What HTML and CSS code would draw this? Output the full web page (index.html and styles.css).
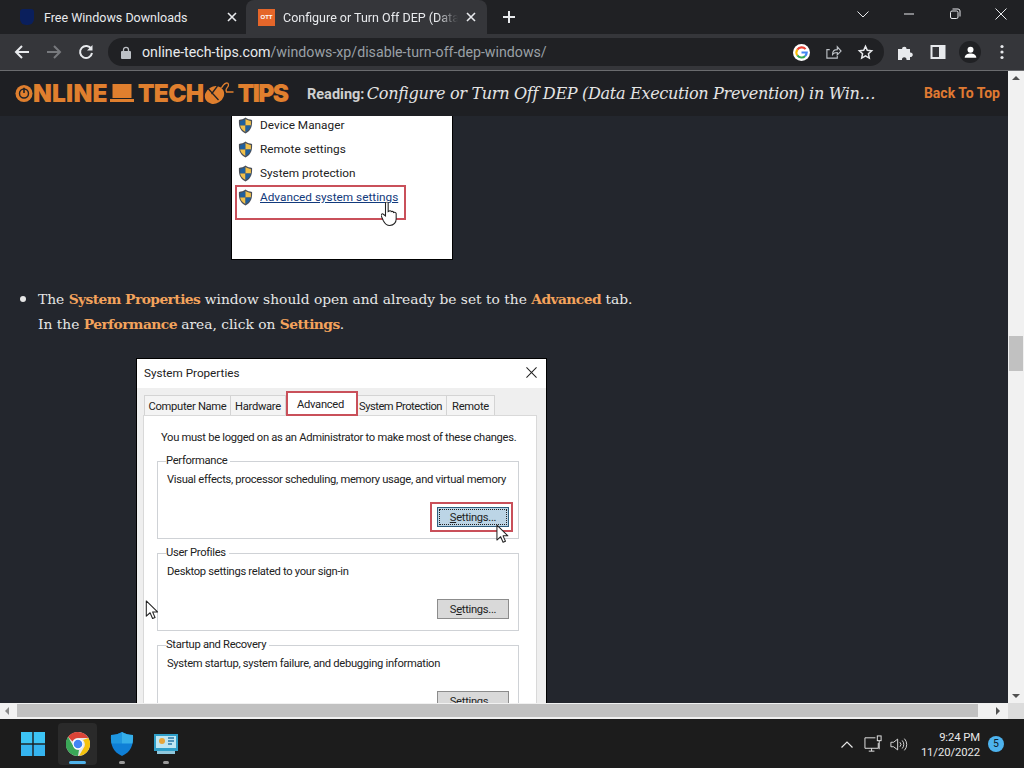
FILE: index.html
```html
<!DOCTYPE html>
<html lang="en">
<head>
<meta charset="utf-8">
<title>Configure or Turn Off DEP</title>
<link rel="stylesheet" href="styles.css">
</head>
<body>
<svg class="defs" width="0" height="0">
  <symbol id="shield" viewBox="0 0 16 18">
    <path d="M8 .5C6 2 3.500 2.800 1 3c-.3 6 .6 11 7 14.500C14.400 14 15.300 9 15 3 12.500 2.800 10 2 8 .5z" fill="#4a4f58"/>
    <path d="M8 2v7H2.300C2.200 7.500 2.200 5.800 2.300 4.100 4.300 3.900 6.300 3.200 8 2z" fill="#1f5f9e"/>
    <path d="M8 2c1.700 1.200 3.700 1.900 5.700 2.100.1 1.700.1 3.400 0 4.900H8z" fill="#f1c04a"/>
    <path d="M2.300 9H8v6.800C4.300 13.800 2.700 11.700 2.300 9z" fill="#f1c04a"/>
    <path d="M8 9h5.700c-.4 2.700-2 4.800-5.700 6.800z" fill="#1f5f9e"/>
  </symbol>
  <symbol id="arrow" viewBox="0 0 14 21">
    <path d="M1 1v16l4-3.600 2.600 6 2.600-1.100-2.600-5.800h5.200z" fill="#fff" stroke="#222" stroke-width="1.100" stroke-linejoin="round"/>
  </symbol>
</svg>

<header class="tabstrip">
  <div class="tab">
    <span class="fav-blue"></span>
    <span class="tab-title">Free Windows Downloads</span>
    <svg class="tab-x" viewBox="0 0 10 10"><path d="M1 1l8 8M9 1l-8 8"/></svg>
  </div>
  <div class="tab active">
    <span class="fav-ott">OTT</span>
    <span class="tab-title fade">Configure or Turn Off DEP (Data</span>
    <svg class="tab-x" viewBox="0 0 10 10"><path d="M1 1l8 8M9 1l-8 8"/></svg>
  </div>
  <svg class="newtab" viewBox="0 0 12 12"><path d="M6 0v12M0 6h12"/></svg>
  <div class="winctl">
    <svg class="ctl chev" viewBox="0 0 12 7"><path d="M.5.500 6 6l5.500-5.500"/></svg>
    <svg class="ctl" viewBox="0 0 12 12"><path d="M1 6h10"/></svg>
    <svg class="ctl" viewBox="0 0 12 12"><rect x="1.500" y="3" width="7.500" height="7.500" rx="1.500"/><path d="M3.500 1h5.500a2 2 0 0 1 2 2v5.500"/></svg>
    <svg class="ctl" viewBox="0 0 12 12"><path d="M.5.500l11 11M11.500.500l-11 11"/></svg>
  </div>
</header>

<nav class="toolbar">
  <svg class="tb-ic" viewBox="0 0 16 16"><path d="M15 8H2M8 2 2 8l6 6" fill="none" stroke="#e8eaed" stroke-width="2"/></svg>
  <svg class="tb-ic" viewBox="0 0 16 16"><path d="M1 8h13M8 2l6 6-6 6" fill="none" stroke="#77797d" stroke-width="2"/></svg>
  <svg class="tb-ic" viewBox="0 0 16 16"><path d="M13.300 5A6 6 0 1 0 14 9" fill="none" stroke="#e8eaed" stroke-width="2"/><path d="M14.500 1v5.500H9z" fill="#e8eaed"/></svg>
  <div class="omnibox">
    <svg class="lock" viewBox="0 0 10 13"><path d="M2.500 6V3.800a2.500 2.500 0 0 1 5 0V6" fill="none" stroke="#bdc1c6" stroke-width="1.300"/><rect y="5" width="10" height="8" rx="1" fill="#bdc1c6"/></svg>
    <span class="url"><span class="host">online-tech-tips.com</span>/windows-xp/disable-turn-off-dep-windows/</span>
    <svg class="omni-ic" viewBox="0 0 18 18"><circle cx="9" cy="9" r="9" fill="#fff"/><g fill="none" stroke-width="2.300"><path d="M13.300 5.400A5.500 5.500 0 0 0 4.600 5.900" stroke="#ea4335"/><path d="M4.600 5.900a5.500 5.500 0 0 0 0 6.200" stroke="#fbbc05"/><path d="M4.600 12.100a5.500 5.500 0 0 0 8.300.6" stroke="#34a853"/><path d="M12.900 12.700A5.500 5.500 0 0 0 14.500 9H9" stroke="#4285f4"/></g></svg>
    <svg class="omni-ic" viewBox="0 0 18 18"><path d="M13 10v5H2V6h3M8 11c0-3 2-5 5-5V3l4 4.500-4 4V9c-2 0-4 .5-5 2z" fill="none" stroke="#bdc1c6" stroke-width="1.200"/></svg>
    <svg class="omni-ic" viewBox="0 0 18 18"><path d="m9 2.500 1.900 4.200 4.600.5-3.400 3.100.9 4.600L9 12.600l-4 2.300.9-4.600-3.400-3.100 4.600-.5z" fill="none" stroke="#e8eaed" stroke-width="1.600"/></svg>
  </div>
  <div class="tb-right">
    <svg class="tb-ic" viewBox="0 0 16 16"><path d="M0 5h4a2.300 2.300 0 1 1 4.600 0H12v3.500a2.300 2.300 0 1 1 0 4.500V16H8.500a2.300 2.300 0 1 0-4.500 0H0z" fill="#e8eaed"/></svg>
    <svg class="tb-ic" viewBox="0 0 16 16"><rect x="1.500" y="2" width="13" height="12" fill="none" stroke="#e8eaed" stroke-width="2"/><rect x="9" y="2" width="6" height="12" fill="#e8eaed"/></svg>
    <span class="avatar"><svg viewBox="0 0 16 16"><circle cx="8" cy="5" r="3.200" fill="#fff"/><path d="M1.800 13.500c0-6 12.400-6 12.400 0z" fill="#fff"/></svg></span>
    <svg class="tb-ic" viewBox="0 0 16 16"><circle cx="8" cy="2.500" r="1.600" fill="#e8eaed"/><circle cx="8" cy="8" r="1.600" fill="#e8eaed"/><circle cx="8" cy="13.500" r="1.600" fill="#e8eaed"/></svg>
  </div>
</nav>

<div class="viewport">
  <main class="page">
    <div class="sitebar">
      <div class="logo">
        <svg class="logo-power" viewBox="0 0 20 20"><circle cx="10" cy="10" r="9.500" fill="#e07f2e"/><circle cx="10" cy="10" r="5" fill="none" stroke="#222327" stroke-width="1.600"/><path d="M10 3.500v6" stroke="#222327" stroke-width="1.800"/></svg>
        <span class="logo-n">NLINE</span>
        <svg class="logo-laptop" viewBox="0 0 24 18"><rect x="2.500" y="0" width="19" height="14" fill="#e07f2e"/><path d="M0 15h24v3H0z" fill="#e07f2e"/></svg>
        <span class="logo-e">TECH</span>
        <svg class="logo-mouse" viewBox="0 0 30 22"><ellipse cx="10" cy="13" rx="10" ry="8.500" transform="rotate(-30 10 13)" fill="#e07f2e"/><path d="M4 7l10 11M13 4 7 12" stroke="#222327" stroke-width="1.300"/><path d="M17 6c3-6 7-6 7-3s-4 3-2 7h7" fill="none" stroke="#e07f2e" stroke-width="1.300"/></svg>
        <span class="logo-t">TIPS</span>
      </div>
      <div class="reading"><b>Reading:</b> <i>Configure or Turn Off DEP (Data Execution Prevention) in Win…</i></div>
      <a class="totop">Back To Top</a>
    </div>

    <div class="article">
      <figure class="shot-links">
        <ul class="task-list">
          <li><svg class="sh"><use href="#shield"/></svg>Device Manager</li>
          <li><svg class="sh"><use href="#shield"/></svg>Remote settings</li>
          <li><svg class="sh"><use href="#shield"/></svg>System protection</li>
          <li class="hot"><svg class="sh"><use href="#shield"/></svg><u>Advanced system settings</u>
            <svg class="hand" viewBox="1 1 15.500 22.500"><path d="M5 1.500c1-1 2.500-1 2.500.5v8l1-.5 0 0c1-.5 2 0 2 .5 1-.5 2 0 2 .8 1-.5 2.500 0 2.500 1V17c0 3-2 6-6 6-3 0-4.500-1.500-6-4.500L1 14c-.6-1.500 1-2.500 2-1.500L5 14z" fill="#fff" stroke="#222" stroke-width="1"/></svg>
          </li>
        </ul>
      </figure>

      <ul class="steps">
        <li>The <b>System Properties</b> window should open and already be set to the <b>Advanced</b> tab.<br>In the <b>Performance</b> area, click on <b>Settings</b>.</li>
      </ul>

      <figure class="dialog">
        <div class="dlg-title"><span>System Properties</span><svg viewBox="0 0 12 12"><path d="M.5.500l11 11M11.500.500l-11 11"/></svg></div>
        <div class="dlg-tabs">
          <span class="dt dt-cn">Computer Name</span>
          <span class="dt dt-hw">Hardware</span>
          <span class="dt dt-adv">Advanced</span>
          <span class="dt dt-sp">System Protection</span>
          <span class="dt dt-re">Remote</span>
        </div>
        <div class="dlg-panel">
          <p class="dlg-note">You must be logged on as an Administrator to make most of these changes.</p>
          <fieldset class="grp">
            <legend>Performance</legend>
            <p>Visual effects, processor scheduling, memory usage, and virtual memory</p>
            <div class="btn-row"><span class="btn focus"><u>S</u>ettings...</span></div>
            <svg class="dlg-cursor"><use href="#arrow"/></svg>
          </fieldset>
          <fieldset class="grp">
            <legend>User Profiles</legend>
            <p>Desktop settings related to your sign-in</p>
            <div class="btn-row"><span class="btn">S<u>e</u>ttings...</span></div>
          </fieldset>
          <fieldset class="grp">
            <legend>Startup and Recovery</legend>
            <p>System startup, system failure, and debugging information</p>
            <div class="btn-row"><span class="btn">Se<u>t</u>tings...</span></div>
          </fieldset>
        </div>
      </figure>
      <svg class="stray-cursor"><use href="#arrow"/></svg>
    </div>
  </main>
  <div class="vscroll">
    <span class="v-up"></span>
    <span class="v-thumb"></span>
    <span class="v-down"></span>
  </div>
</div>

<div class="hscroll">
  <span class="h-left"></span>
  <span class="h-thumb"></span>
  <span class="h-right"></span>
  <span class="h-corner"></span>
</div>

<footer class="taskbar">
  <div class="tb-apps">
    <svg class="app start" viewBox="0 0 24 24"><g fill="#3cc4f5"><rect width="11.300" height="11.300"/><rect x="12.700" width="11.300" height="11.300"/><rect y="12.700" width="11.300" height="11.300" fill="#35b4f0"/><rect x="12.700" y="12.700" width="11.300" height="11.300" fill="#35b4f0"/></g></svg>
    <div class="tile on">
      <svg class="app" viewBox="0 0 24 24"><circle cx="12" cy="12" r="12" fill="#e8e8e8"/><path d="M12 0a12 12 0 0 1 10.400 6H12a6 6 0 0 0-5.500 3.500L2.100 5A12 12 0 0 1 12 0z" fill="#db4437"/><path d="M22.400 6A12 12 0 0 1 13 24l4.600-8A6 6 0 0 0 17 8z" fill="#f4c20d"/><path d="M2.100 5 7 13.500A6 6 0 0 0 13 18l-1 6A12 12 0 0 1 2.100 5z" fill="#3aa757"/><circle cx="12" cy="12" r="5.300" fill="#fff"/><circle cx="12" cy="12" r="4.300" fill="#4285f4"/></svg>
      <span class="ind long"></span>
    </div>
    <div class="tile">
      <svg class="app" viewBox="0 0 24 24"><path d="M12 0c3 2 7 3 11 3 .6 10-2 17-11 21C3 20 .4 13 1 3c4 0 8-1 11-3z" fill="#0f7fd6"/><path d="M12 0c3 2 7 3 11 3 .2 3 0 6-.5 8.500H12z" fill="#35aee8"/><path d="M12 0v11.500H1.500C1 9 .8 6 1 3c4 0 8-1 11-3z" fill="#1f97e0"/></svg>
      <span class="ind"></span>
    </div>
    <div class="tile">
      <svg class="app" viewBox="0 0 24 20"><rect width="24" height="17" fill="#2f9fc9"/><rect x="2" y="2" width="20" height="12" fill="#bfe6f2"/><circle cx="8" cy="7" r="3" fill="#e8a63a"/><path d="M14 4h6M14 7h6M14 10h4" stroke="#2a78a8" stroke-width="1.500"/><rect x="3" y="17" width="18" height="3" fill="#8fc7dc"/></svg>
      <span class="ind"></span>
    </div>
  </div>
  <div class="tray">
    <svg class="tr-chev" viewBox="0 0 12 7"><path d="M.5 6.500 6 1l5.500 5.500"/></svg>
    <svg class="tr-net" viewBox="0 0 20 18"><path d="M12 2.500H1v11h14V8M5 16.500h6M8 13.500v3" /><rect x="14" y=".5" width="4" height="5"/><path d="M16 5.500v9"/></svg>
    <svg class="tr-vol" viewBox="0 0 20 16"><path d="M1 5.500h3L8.500 2v12L4 10.500H1zM11 5.500a3.500 3.500 0 0 1 0 5M13.500 3.500a6.500 6.500 0 0 1 0 9M16 1.500a9.500 9.500 0 0 1 0 13"/></svg>
    <div class="clock"><span>9:24 PM</span><span>11/20/2022</span></div>
    <span class="badge">5</span>
  </div>
</footer>
</body>
</html>
```
FILE: styles.css
```css
* { box-sizing: border-box; }
html, body { margin: 0; height: 768px; overflow: hidden; }
body { display: flex; flex-direction: column; background: #202124; font-family: "Liberation Sans", Arial, sans-serif; }
.defs { position: absolute; }
p, ul, figure { margin: 0; padding: 0; }

/* tab strip */
.tabstrip { height: 34px; flex: none; display: flex; align-items: flex-end; background: #202124; padding-left: 8px; }
.tab { width: 238px; height: 34px; display: flex; align-items: center; padding: 0 7px 0 12px; color: #e8eaed; font: 12.500px "Roboto", sans-serif; }
.tab.active { width: 241px; background: #35363a; border-radius: 8px 8px 0 0; padding-left: 12px; padding-right: 9px; }
.fav-blue { width: 14px; height: 16px; margin-right: 10px; border-radius: 3px 3px 6px 6px; background: #0a1f5c; flex: none; }
.fav-ott { width: 17px; height: 17px; margin-right: 8px; background: #e5662a; color: #fff; font: bold 6px/17px "Liberation Sans", sans-serif; text-align: center; flex: none; }
.tab-title { flex: 1; white-space: nowrap; overflow: hidden; }
.fade { -webkit-mask-image: linear-gradient(90deg, #000 88%, transparent); mask-image: linear-gradient(90deg, #000 88%, transparent); }
.tab-x { width: 10px; height: 10px; margin-left: 8px; margin-right: 2px; fill: none; stroke: #e8eaed; stroke-width: 1.600; flex: none; }
.newtab { width: 12px; height: 12px; margin: 0 0 11px 16px; fill: none; stroke: #e8eaed; stroke-width: 2; flex: none; }
.winctl { margin-left: auto; display: flex; align-items: center; height: 28px; align-self: flex-start; padding-right: 17px; gap: 34px; }
.ctl { width: 12px; height: 12px; fill: none; stroke: #e8eaed; stroke-width: 1; }
.chev { width: 12px; height: 7px; }

/* toolbar */
.toolbar { height: 37px; flex: none; display: flex; align-items: center; background: #35363a; border-bottom: 1px solid #6a6b6e; padding: 0 0 0 14px; }
.tb-ic { width: 16px; height: 16px; flex: none; margin-right: 16px; }
.omnibox { width: 776px; height: 28px; margin-left: -2px; background: #202124; border-radius: 14px; display: flex; align-items: center; padding: 0 10px 0 13px; }
.lock { width: 10px; height: 13px; margin-right: 11px; flex: none; }
.url { flex: 1; color: #9aa0a6; font: 14.200px "Roboto", sans-serif; white-space: nowrap; }
.host { color: #e8eaed; }
.omni-ic { width: 17px; height: 17px; margin-left: 15px; flex: none; }
.tb-right { display: flex; align-items: center; padding-left: 14px; }
.avatar { width: 22px; height: 22px; border-radius: 50%; background: #202124; display: flex; align-items: center; justify-content: center; margin: 0 13px 0 -3px; flex: none; }
.avatar svg { width: 15px; height: 15px; }
.tb-right .tb-ic:last-child { margin-right: 0; }

/* page */
.viewport { height: 632px; flex: none; display: flex; overflow: hidden; }
.page { flex: 1; min-width: 0; background: #23262d; overflow: hidden; position: relative; }
.sitebar { height: 45px; background: #1e1f23; display: flex; align-items: center; padding: 0 8px 1px 15px; position: relative; z-index: 2; }
.logo { display: flex; align-items: center; width: 272px; flex: none; color: #e07f2e; font: 900 24.500px/1 "Inter", sans-serif; }
.logo-power { width: 18px; height: 19px; flex: none; }
.logo-n { letter-spacing: .2px; }
.logo-e { letter-spacing: -.7px; }
.logo-t { letter-spacing: -1.600px; }
.logo-laptop { width: 24px; height: 18px; margin: 0 4px 0 2px; flex: none; }
.logo-mouse { width: 31px; height: 22px; margin: 0 2px 0 1px; flex: none; }
.reading { margin-left: 20px; width: 572px; flex: none; color: #e4e4e4; white-space: nowrap; overflow: hidden; }
.reading b { font: bold 14.500px "Roboto", sans-serif; color: #cfcfcf; }
.reading i { font: italic 16.100px "DejaVu Serif", serif; letter-spacing: -.34px; margin-left: -2px; }
.totop { color: #e07a32; font: bold 14px "Roboto", sans-serif; margin-left: auto; white-space: nowrap; }

.shot-links { width: 222px; height: 144px; margin-left: 231px; background: #fff; border: 1px solid #000; border-top: 0; display: flow-root; }
.task-list { list-style: none; padding: 0 0 0 6px; margin-top: -3px; }
.task-list li { height: 24px; display: flex; align-items: center; color: #222; font: 11.800px "Roboto", sans-serif; position: relative; }
.sh { width: 15px; height: 17px; margin-right: 7px; flex: none; }
.task-list .hot { color: #123a7c; }
.task-list .hot::before { content: ""; position: absolute; left: -3px; top: 0; width: 167px; height: 31px; border: 2px solid #c9505a; }
.hand { position: absolute; left: 143px; top: 17px; width: 17px; height: 24px; }

.steps { list-style: disc; padding: 25px 0 0 38px; color: #e6e6e6; font: 13.800px/25px "DejaVu Serif", serif; }
.steps li::marker { font-size: 1.300em; }
.steps b { color: #f4a35c; letter-spacing: -.55px; }

.dialog { width: 411px; height: 400px; margin: 21px 0 0 136px; background: #efefef; border: 1px solid #000; }
.dlg-title { height: 29px; background: #fff; display: flex; align-items: center; justify-content: space-between; padding: 0 9px 2px 7px; color: #222; font: 11.700px "Roboto", sans-serif; }
.dlg-title svg { width: 11px; height: 11px; fill: none; stroke: #222; stroke-width: 1.100; }
.dlg-tabs { height: 27px; display: flex; align-items: flex-end; padding-left: 7px; color: #222; font: 11.200px "Roboto", sans-serif; letter-spacing: -.3px; white-space: nowrap; }
.dt { height: 20px; padding-top: 2px; display: flex; align-items: center; justify-content: center; border: 1px solid #d4d4d4; border-bottom: 0; background: #f4f4f4; }
.dt-cn { width: 87px; }
.dt-hw { width: 55px; border-left: 0; }
.dt-adv { width: 72px; height: 25px; padding: 1px 3px 0 0; background: #fff; border: 2px solid #c9505a; margin-bottom: -1px; position: relative; z-index: 1; }
.dt-sp { width: 89px; border-left: 0; letter-spacing: -.5px; padding-right: 3px; }
.dt-re { width: 48px; border-left: 0; }
.dlg-panel { margin: 0 9px 0 6px; height: 340px; background: #fff; border: 1px solid #d9d9d9; padding: 15px 17px 0 13px; color: #222; font: 11.200px "Roboto", sans-serif; letter-spacing: -.3px; }
.dlg-note { height: 24px; padding-left: 4px; white-space: nowrap; }
.grp { position: relative; height: 84px; margin: 0 0 8px; padding: 0 9px; border: 1px solid #cfd2d6; min-width: 0; }
.grp legend { padding: 0 3px 0 0; margin-left: -1px; line-height: 12px; }
.grp p { margin-top: 6px; white-space: nowrap; }
.btn-row { display: flex; justify-content: flex-end; margin-top: 21px; }
.btn { width: 72px; height: 20px; display: flex; align-items: center; justify-content: center; background: #d9d9d9; border: 1px solid #8c8c8c; white-space: pre; position: relative; }
.btn.focus { background: #bcd5e6; border-color: #2f5f7f; outline: 1px dotted #222; outline-offset: -3px; }
.btn.focus::after { content: ""; position: absolute; left: -8px; right: -5px; top: -6px; bottom: -6px; border: 2px solid #c9505a; }
.dlg-cursor { position: absolute; right: 9px; top: 57px; width: 13px; height: 20px; z-index: 1; }
.stray-cursor { position: absolute; left: 145px; top: 529px; width: 14px; height: 20px; }

/* scrollbars */
.vscroll { width: 16px; flex: none; background: #f1f1f1; position: relative; }
.v-up, .v-down, .h-left, .h-right { position: absolute; width: 0; height: 0; border: 4px solid transparent; }
.v-up { left: 4px; top: 5px; border-top: 0; border-bottom-color: #505050; }
.v-down { left: 4px; bottom: 5px; border-bottom: 0; border-top-color: #505050; }
.v-thumb { position: absolute; left: 1px; top: 265px; width: 14px; height: 35px; background: #c1c1c1; }
.hscroll { height: 17px; flex: none; background: #f1f1f1; position: relative; border-bottom: 1px solid #1c1c1c; }
.h-left { left: 5px; top: 4px; border-left: 0; border-right-color: #8a8a8a; }
.h-right { left: 996px; top: 4px; border-right: 0; border-left-color: #505050; }
.h-thumb { position: absolute; left: 17px; top: 1px; width: 961px; height: 13px; background: #c1c1c1; }
.h-corner { position: absolute; right: 0; top: 0; width: 16px; height: 16px; background: #dcdcdc; }

/* taskbar */
.taskbar { height: 48px; flex: none; background: #1c1c1c; display: flex; align-items: center; justify-content: space-between; color: #fff; }
.tb-apps { display: flex; align-items: center; padding-left: 21px; }
.app { width: 24px; height: 24px; display: block; }
.start { margin-right: 13px; }
.tile { width: 39px; height: 42px; margin-right: 5px; border-radius: 4px; display: flex; flex-direction: column; align-items: center; justify-content: flex-start; padding-top: 9px; position: relative; }
.tile.on { background: #2a2a2a; }
.ind { position: absolute; bottom: 1px; width: 6px; height: 3px; border-radius: 2px; background: #9a9a9a; }
.ind.long { width: 17px; background: #4fb2ea; }
.tray { display: flex; align-items: center; padding-right: 20px; }
.tr-chev { width: 12px; height: 7px; fill: none; stroke: #e8e8e8; stroke-width: 1.200; margin-right: 11px; }
.tr-net { width: 19px; height: 18px; fill: none; stroke: #e8e8e8; stroke-width: 1; margin-right: 7px; }
.tr-vol { width: 18px; height: 15px; fill: none; stroke: #e8e8e8; stroke-width: 1; margin-right: 2px; }
.clock { width: 70px; padding-top: 1px; display: flex; flex-direction: column; align-items: flex-end; font: 11.300px/15px "Roboto", sans-serif; letter-spacing: -.1px; color: #e8e8e8; }
.badge { width: 16px; height: 16px; margin-left: 8px; border-radius: 50%; background: #4db3ee; color: #10202c; font: 10.500px/16px "Roboto", sans-serif; text-align: center; flex: none; }
```
